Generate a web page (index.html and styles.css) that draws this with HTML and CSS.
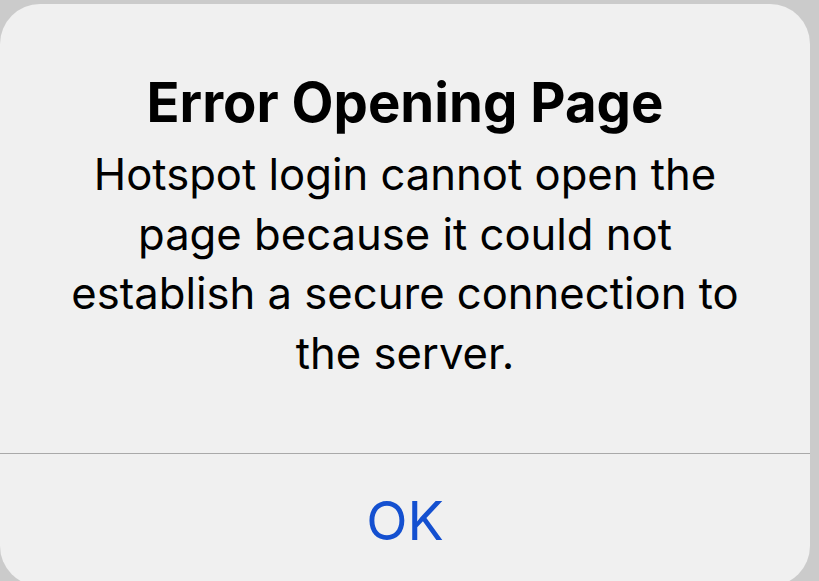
FILE: index.html
```html
<!DOCTYPE html>
<html lang="en">
<head>
<meta charset="utf-8">
<title>Error Opening Page</title>
<link rel="stylesheet" href="styles.css">
</head>
<body>
<div class="alert">
  <div class="alert-content">
    <h1 class="alert-title">Error Opening Page</h1>
    <p class="alert-message">Hotspot login cannot open the page because it could not establish a secure connection to the server.</p>
  </div>
  <div class="alert-actions">
    <button class="alert-button">OK</button>
  </div>
</div>
</body>
</html>
```

FILE: styles.css
```css
html, body {
  margin: 0;
  padding: 0;
  height: 100%;
  overflow: hidden;
  background: #cbcbcb;
  font-family: Inter, "Noto Sans", sans-serif;
}

.alert {
  margin-top: 4px;
  width: 810px;
  height: 582px;
  background: #f0f0f0;
  border-radius: 40px;
  display: flex;
  flex-direction: column;
}

.alert-content {
  height: 450px;
  box-sizing: border-box;
  border-bottom: 1px solid #a9a9a9;
  padding: 66px 40px 0;
  text-align: center;
  color: #000;
}

.alert-title {
  margin: 0;
  font-size: 54.5px;
  font-weight: 700;
  line-height: 64px;
  letter-spacing: 0;
}

.alert-message {
  margin: 11px 0 0;
  font-size: 43.6px;
  font-weight: 400;
  line-height: 59.5px;
}

.alert-actions {
  flex: 1;
  display: flex;
  align-items: flex-start;
  justify-content: center;
}

.alert-button {
  margin-top: 35px;
  border: 0;
  background: none;
  padding: 0;
  font-family: inherit;
  font-size: 54px;
  font-weight: 400;
  color: #1450d0;
  line-height: 64px;
}
```
